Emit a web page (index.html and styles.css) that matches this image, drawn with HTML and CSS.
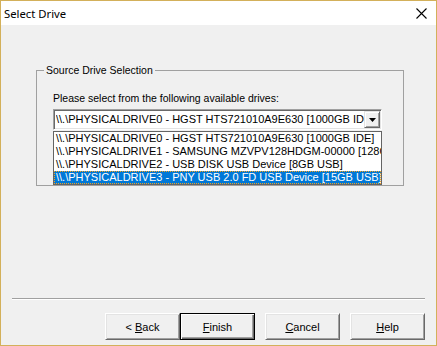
FILE: index.html
```html
<!DOCTYPE html>
<html lang="en">
<head>
  <meta charset="UTF-8">
  <title>Select Drive</title>
  <link rel="stylesheet" href="styles.css">
</head>
<body>

<div class="dialog">
  <div class="titlebar">
    <span class="title">Select Drive</span>
    <svg class="close" width="11" height="11" viewBox="0 0 11 11">
      <path d="M0.5 0.5 L10.5 10.5 M10.5 0.5 L0.5 10.5" stroke="#000" stroke-width="1.1" fill="none"/>
    </svg>
  </div>

  <div class="content">
    <fieldset class="group">
      <legend>Source Drive Selection</legend>
      <div class="prompt">Please select from the following available drives:</div>
      <div class="combo">
        <span class="combo-text">\\.\PHYSICALDRIVE0 - HGST HTS721010A9E630 [1000GB IDE]</span>
        <span class="drop-btn">
          <svg width="7" height="4" viewBox="0 0 7 4"><path d="M0 0 H7 L3.5 4 Z" fill="#000"/></svg>
        </span>
      </div>
      <ul class="drive-list">
        <li>\\.\PHYSICALDRIVE0 - HGST HTS721010A9E630 [1000GB IDE]</li>
        <li>\\.\PHYSICALDRIVE1 - SAMSUNG MZVPV128HDGM-00000 [128GB NVMe]</li>
        <li>\\.\PHYSICALDRIVE2 - USB DISK USB Device [8GB USB]</li>
        <li class="selected">\\.\PHYSICALDRIVE3 - PNY USB 2.0 FD USB Device [15GB USB]</li>
      </ul>
    </fieldset>
  </div>

  <div class="footer">
    <div class="separator"></div>
    <div class="buttons">
      <button class="btn btn-back">&lt; <u>B</u>ack</button>
      <button class="btn btn-default"><u>F</u>inish</button>
      <button class="btn"><u>C</u>ancel</button>
      <button class="btn"><u>H</u>elp</button>
    </div>
  </div>
</div>

</body>
</html>
```

FILE: styles.css
```css
body {
  margin: 0;
  padding: 0;
  background-color: #f0f0f0;
}
.dialog {
  width: 437px;
  height: 346px;
  box-sizing: border-box;
  border: 1px solid #d3b05a;
  background-color: #f0f0f0;
  display: flex;
  flex-direction: column;
  font-family: 'Liberation Sans', Arial, sans-serif;
  font-size: 11px;
  color: #000;
}
.titlebar {
  height: 24px;
  background-color: #fff;
  display: flex;
  align-items: center;
  justify-content: space-between;
  padding: 0 9px 0 3px;
}
.title {
  font-family: 'Noto Sans', 'Open Sans', sans-serif;
  font-size: 11.3px;
  color: #000;
}
.close {
  display: block;
  margin-top: 1px;
}
.content {
  flex: 1;
  padding-top: 39px;
}
.group {
  margin: 0 0 0 35px;
  width: 368px;
  box-sizing: border-box;
  border: 1px solid #a0a0a0;
  padding: 0 0 0 16px;
}
.group legend {
  margin-left: -9px;
  padding: 0 2px;
  line-height: 13px;
  font-size: 10.5px;
}
.prompt {
  margin-top: 15px;
  line-height: 13px;
  font-size: 10.5px;
}
.combo {
  margin-top: 4px;
  width: 329px;
  height: 21px;
  box-sizing: border-box;
  background: #fff;
  border: 1px solid;
  border-color: #a0a0a0 #fff #fff #a0a0a0;
  box-shadow: inset 1px 1px 0 #696969, inset -1px -1px 0 #e3e3e3;
  display: flex;
  align-items: center;
  padding: 1px 1px 1px 2px;
}
.combo-text {
  flex: 1;
  white-space: nowrap;
  overflow: hidden;
  line-height: 17px;
}
.drop-btn {
  width: 16px;
  height: 17px;
  box-sizing: border-box;
  background: #f0f0f0;
  border: 1px solid;
  border-color: #e3e3e3 #696969 #696969 #e3e3e3;
  box-shadow: inset 1px 1px 0 #fff, inset -1px -1px 0 #a0a0a0;
  display: flex;
  align-items: center;
  justify-content: center;
}
.drive-list {
  list-style: none;
  margin: 1px 0 0 0;
  padding: 0;
  width: 329px;
  box-sizing: border-box;
  background: #fff;
  border: 1px solid #646464;
}
.drive-list li {
  height: 13px;
  line-height: 13px;
  padding-left: 2px;
  white-space: nowrap;
  overflow: hidden;
}
.drive-list li.selected {
  background-color: #0078d7;
  color: #fff;
  outline: 1px dotted #f7a21b;
  outline-offset: -1px;
}
.footer {
  padding: 0 11px 5px 11px;
}
.separator {
  border-top: 1px solid #a0a0a0;
  border-bottom: 1px solid #fff;
}
.buttons {
  margin-top: 13px;
  display: flex;
  justify-content: flex-end;
  gap: 10px;
}
.btn {
  width: 75px;
  height: 27px;
  box-sizing: border-box;
  font-family: 'Liberation Sans', Arial, sans-serif;
  font-size: 11px;
  color: #000;
  background: #f0f0f0;
  border: 1px solid;
  border-color: #fff #696969 #696969 #fff;
  box-shadow: inset 1px 1px 0 #e3e3e3, inset -1px -1px 0 #a0a0a0;
  padding: 0;
}
.btn-back {
  margin-right: -10px;
}
.btn-default {
  border: 1px solid #000;
  box-shadow: inset 1px 1px 0 #fff, inset -1px -1px 0 #696969, inset -2px -2px 0 #a0a0a0;
}
```
